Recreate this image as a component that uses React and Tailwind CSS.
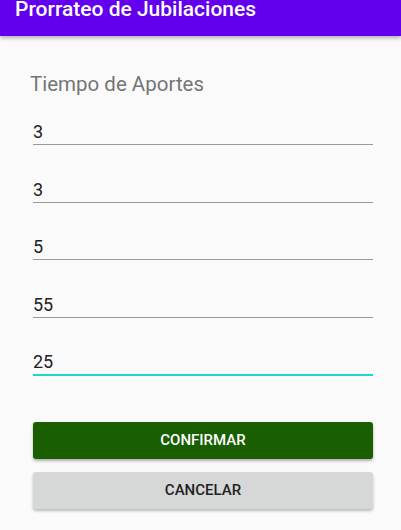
import React from "react";

const values = ["3", "3", "5", "55", "25"];

export default function App() {
  return (
    <div className="w-[401px] h-[530px] bg-[#fafafa] font-['Roboto',sans-serif] overflow-hidden">
      {/* toolbar */}
      <div className="h-[37px] bg-[#6200ee] pl-[15px] shadow-[0_2px_4px_rgba(0,0,0,0.3)] relative z-10">
        <div className="text-white text-[21px] leading-[21px] font-medium -mt-[1px]">
          Prorrateo de Jubilaciones
        </div>
      </div>

      <div className="pl-[33px] pr-[28px] pt-[36px]">
        <div className="-ml-[3px] text-[20.5px] leading-[24px] text-[#757575]">
          Tiempo de Aportes
        </div>

        <div className="mt-[24px] flex flex-col gap-[32.5px]">
          {values.map((v, i) => (
            <div
              key={i}
              className={
                i === values.length - 1
                  ? "text-[18px] leading-[24px] text-[#212121] border-b-2 border-[#1ad9c8]"
                  : "text-[18px] leading-[24px] text-[#212121] border-b border-[#999999]"
              }
            >
              {v}
            </div>
          ))}
        </div>

        <div className="mt-[46px] flex flex-col gap-[13px]">
          <button className="h-[37px] w-full rounded-[3px] bg-[#1a5e02] text-white text-[15px] font-medium shadow-[0_2px_3px_rgba(0,0,0,0.3)]">
            CONFIRMAR
          </button>
          <button className="h-[37px] w-full rounded-[3px] bg-[#d6d7d7] text-[#222] text-[15px] font-medium shadow-[0_2px_3px_rgba(0,0,0,0.25)]">
            CANCELAR
          </button>
        </div>
      </div>
    </div>
  );
}
